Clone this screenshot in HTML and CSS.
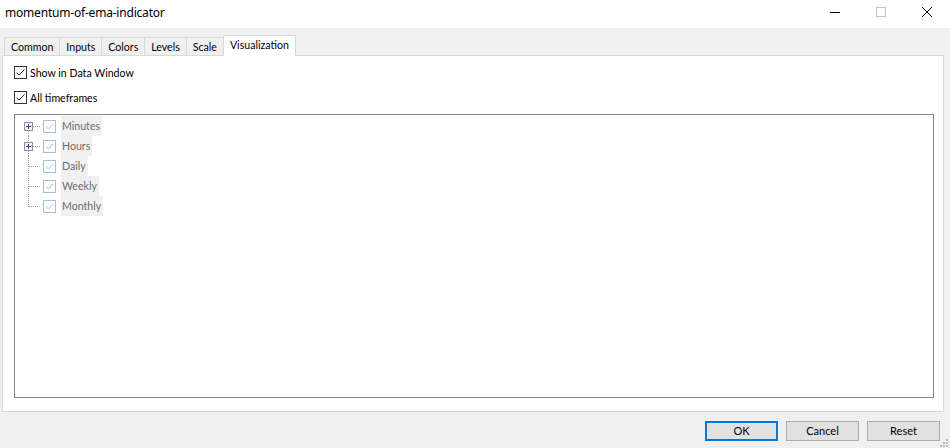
FILE: index.html
```html
<!DOCTYPE html>
<html>
<head>
<meta charset="utf-8">
<link rel="stylesheet" href="styles.css">
</head>
<body>
<div class="window">
  <div class="titlebar">
    <div class="title">momentum-of-ema-indicator</div>
    <div class="controls">
      <div class="ctl"><svg width="10" height="10" viewBox="0 0 10 10"><path d="M0 5.5H10" stroke="#000" stroke-width="1"/></svg></div>
      <div class="ctl"><svg width="10" height="10" viewBox="0 0 10 10"><rect x="0.5" y="0.5" width="9" height="9" fill="none" stroke="#c4c4c4"/></svg></div>
      <div class="ctl"><svg width="10" height="10" viewBox="0 0 10 10"><path d="M0 0L10 10M10 0L0 10" stroke="#000" stroke-width="1"/></svg></div>
    </div>
  </div>
  <div class="client">
    <div class="tabs">
      <div class="tab">Common</div>
      <div class="tab">Inputs</div>
      <div class="tab">Colors</div>
      <div class="tab">Levels</div>
      <div class="tab">Scale</div>
      <div class="tab active">Visualization</div>
    </div>
    <div class="panel">
      <label class="check">
        <span class="box"><svg width="11" height="11" viewBox="0 0 11 11"><path d="M1.5 5.5L4 8L9.5 2.5" fill="none" stroke="#333" stroke-width="1"/></svg></span>
        <span>Show in Data Window</span>
      </label>
      <label class="check">
        <span class="box"><svg width="11" height="11" viewBox="0 0 11 11"><path d="M1.5 5.5L4 8L9.5 2.5" fill="none" stroke="#333" stroke-width="1"/></svg></span>
        <span>All timeframes</span>
      </label>
      <div class="tree">
        <div class="row">
          <svg class="conn" width="28" height="20" viewBox="0 0 28 20"><path d="M13.5 15V20M18 10.5H26" stroke="#a0a0a0" stroke-dasharray="1 1"/><rect x="9.5" y="6.5" width="8" height="8" fill="#f4f4f4" stroke="#919191"/><path d="M11 10.5H16M13.5 8V13" stroke="#2b4aa0"/></svg>
          <span class="tbox"><svg width="11" height="11" viewBox="0 0 11 11"><path d="M2 5.5L4.5 8L9 3" fill="none" stroke="#a7bdd6" stroke-width="1"/></svg></span>
          <span class="tlabel">Minutes</span>
        </div>
        <div class="row">
          <svg class="conn" width="28" height="20" viewBox="0 0 28 20"><path d="M13.5 0V6M13.5 15V20M18 10.5H26" stroke="#a0a0a0" stroke-dasharray="1 1"/><rect x="9.5" y="6.5" width="8" height="8" fill="#f4f4f4" stroke="#919191"/><path d="M11 10.5H16M13.5 8V13" stroke="#2b4aa0"/></svg>
          <span class="tbox"><svg width="11" height="11" viewBox="0 0 11 11"><path d="M2 5.5L4.5 8L9 3" fill="none" stroke="#a7bdd6" stroke-width="1"/></svg></span>
          <span class="tlabel">Hours</span>
        </div>
        <div class="row">
          <svg class="conn" width="28" height="20" viewBox="0 0 28 20"><path d="M13.5 0V20M14 10.5H26" stroke="#a0a0a0" stroke-dasharray="1 1"/></svg>
          <span class="tbox"><svg width="11" height="11" viewBox="0 0 11 11"><path d="M2 5.5L4.5 8L9 3" fill="none" stroke="#a7bdd6" stroke-width="1"/></svg></span>
          <span class="tlabel">Daily</span>
        </div>
        <div class="row">
          <svg class="conn" width="28" height="20" viewBox="0 0 28 20"><path d="M13.5 0V20M14 10.5H26" stroke="#a0a0a0" stroke-dasharray="1 1"/></svg>
          <span class="tbox"><svg width="11" height="11" viewBox="0 0 11 11"><path d="M2 5.5L4.5 8L9 3" fill="none" stroke="#a7bdd6" stroke-width="1"/></svg></span>
          <span class="tlabel">Weekly</span>
        </div>
        <div class="row">
          <svg class="conn" width="28" height="20" viewBox="0 0 28 20"><path d="M13.5 0V11M14 10.5H26" stroke="#a0a0a0" stroke-dasharray="1 1"/></svg>
          <span class="tbox"><svg width="11" height="11" viewBox="0 0 11 11"><path d="M2 5.5L4.5 8L9 3" fill="none" stroke="#a7bdd6" stroke-width="1"/></svg></span>
          <span class="tlabel">Monthly</span>
        </div>
      </div>
    </div>
    <div class="footer">
      <button class="btn default">OK</button>
      <button class="btn">Cancel</button>
      <button class="btn">Reset</button>
    </div>
    <svg class="grip" width="10" height="10" viewBox="0 0 10 10"><g fill="#bcbcbc"><rect x="7" y="1" width="2" height="2"/><rect x="4" y="4" width="2" height="2"/><rect x="7" y="4" width="2" height="2"/><rect x="1" y="7" width="2" height="2"/><rect x="4" y="7" width="2" height="2"/><rect x="7" y="7" width="2" height="2"/></g></svg>
  </div>
</div>
</body>
</html>
```
FILE: styles.css
```css
html, body {
  margin: 0;
  padding: 0;
  width: 950px;
  height: 448px;
  overflow: hidden;
}
body {
  font-family: Lato, "Noto Sans", sans-serif;
  font-size: 10.6px;
  color: #000;
}
.window {
  width: 950px;
  height: 448px;
  display: flex;
  flex-direction: column;
}
.titlebar {
  height: 28px;
  background: #fff;
  display: flex;
  justify-content: space-between;
  align-items: stretch;
  flex: none;
}
.title {
  padding-left: 5px;
  line-height: 26px;
  font-family: "Noto Sans", sans-serif;
  font-size: 12px;
  letter-spacing: -0.2px;
}
.controls {
  display: flex;
}
.ctl {
  width: 46px;
  display: flex;
  align-items: center;
  justify-content: center;
  padding-bottom: 4px;
}
.client {
  flex: 1;
  background: #f0f0f0;
  position: relative;
  display: flex;
  flex-direction: column;
}
.tabs {
  display: flex;
  align-items: flex-end;
  padding: 7px 0 0 4px;
  height: 20px;
}
.tab {
  height: 17px;
  border: 1px solid #d9d9d9;
  border-bottom: none;
  border-right: none;
  padding: 0 6px;
  line-height: 19px;
  background: #f0f0f0;
  white-space: nowrap;
}
.tab.active {
  height: 20px;
  margin-bottom: -1px;
  background: #fff;
  border-right: 1px solid #d9d9d9;
  line-height: 18px;
  padding: 0 6px;
  position: relative;
  z-index: 2;
}
.panel {
  margin-left: 2px;
  border: 1px solid #d9d9d9;
  background: #fff;
  padding: 10px 0 0 11px;
  display: flex;
  flex-direction: column;
  box-sizing: border-box;
  width: 942px;
  height: 357px;
}
.check {
  display: flex;
  align-items: center;
  height: 13px;
  margin-bottom: 12px;
}
.box {
  width: 11px;
  height: 11px;
  border: 1px solid #333;
  background: #fff;
  margin-right: 3px;
  display: flex;
}
.tree {
  margin-top: -2px;
  width: 920px;
  height: 284px;
  box-sizing: border-box;
  border: 1px solid #828790;
  padding-top: 1px;
}
.row {
  display: flex;
  align-items: center;
  height: 20px;
}
.conn {
  display: block;
  flex: none;
}
.tbox {
  width: 11px;
  height: 11px;
  border: 1px solid #a7bdd6;
  background: #fff;
  display: flex;
  margin-right: 5px;
}
.tlabel {
  background: #f0f0f0;
  color: #6d6d6d;
  height: 20px;
  line-height: 20px;
  padding: 0 2px 0 1px;
}
.footer {
  display: flex;
  justify-content: flex-end;
  gap: 8px;
  padding: 9px 10px 0 0;
}
.btn {
  width: 73px;
  height: 20px;
  box-sizing: border-box;
  border: 1px solid #adadad;
  background: #e1e1e1;
  font-family: inherit;
  font-size: 11px;
  padding: 0;
  color: #000;
  line-height: 16px;
}
.btn.default {
  border: 2px solid #0078d7;
}
.grip {
  position: absolute;
  right: 1px;
  bottom: 0;
}
```
